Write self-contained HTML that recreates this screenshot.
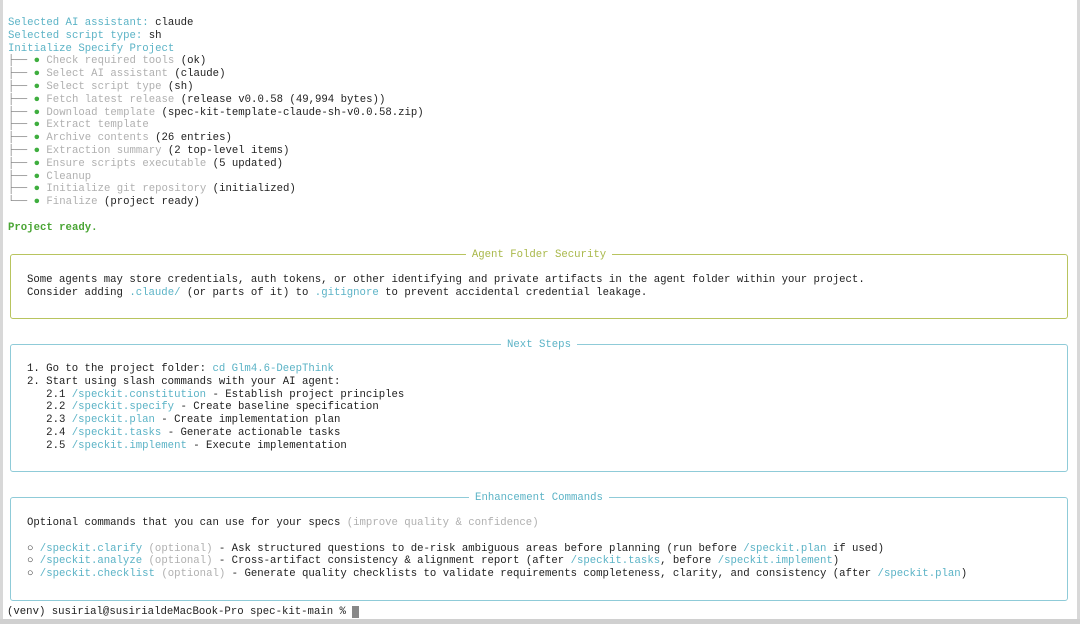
<!DOCTYPE html>
<html><head><meta charset="utf-8"><style>
html,body{margin:0;padding:0;background:#fff;width:1080px;height:624px;overflow:hidden;position:relative}
.t{font-family:"Liberation Mono","DejaVu Sans Mono",monospace;font-size:10.67px;line-height:12.8px;color:#1e1e1e;white-space:pre;position:absolute;margin:0}
.c{color:#5bb3c6}.g{color:#b0b0b0}.d{color:#3fae3f}.tr{color:#888}
.pr{color:#4aa534;font-weight:bold}
.box{position:absolute;left:10px;width:1056px;border:1px solid #8fcbd8;border-radius:3px}
.ol{border-color:#b8c45e}
.ttl{position:absolute;top:-6px;left:0;right:0;text-align:center;font-family:"Liberation Mono",monospace;font-size:10.67px;line-height:12.8px;white-space:pre}
.ttl span{background:#fff;padding:0 6px}
</style></head><body>
<div style="position:absolute;left:0;top:0;width:3px;height:624px;background:#d8d8d8"></div>
<div style="position:absolute;right:0;top:0;width:3px;height:624px;background:#d8d8d8"></div>
<div style="position:absolute;left:0;top:619px;width:1080px;height:5px;background:#d0d0d0"></div>
<pre class="t" style="left:8px;top:17px"><span class="c">Selected AI assistant:</span> claude
<span class="c">Selected script type:</span> sh
<span class="c">Initialize Specify Project</span>
<span class="tr">├──</span> <span class="d">●</span> <span class="g">Check required tools</span> (ok)
<span class="tr">├──</span> <span class="d">●</span> <span class="g">Select AI assistant</span> (claude)
<span class="tr">├──</span> <span class="d">●</span> <span class="g">Select script type</span> (sh)
<span class="tr">├──</span> <span class="d">●</span> <span class="g">Fetch latest release</span> (release v0.0.58 (49,994 bytes))
<span class="tr">├──</span> <span class="d">●</span> <span class="g">Download template</span> (spec-kit-template-claude-sh-v0.0.58.zip)
<span class="tr">├──</span> <span class="d">●</span> <span class="g">Extract template</span>
<span class="tr">├──</span> <span class="d">●</span> <span class="g">Archive contents</span> (26 entries)
<span class="tr">├──</span> <span class="d">●</span> <span class="g">Extraction summary</span> (2 top-level items)
<span class="tr">├──</span> <span class="d">●</span> <span class="g">Ensure scripts executable</span> (5 updated)
<span class="tr">├──</span> <span class="d">●</span> <span class="g">Cleanup</span>
<span class="tr">├──</span> <span class="d">●</span> <span class="g">Initialize git repository</span> (initialized)
<span class="tr">└──</span> <span class="d">●</span> <span class="g">Finalize</span> (project ready)

<span class="pr">Project ready.</span></pre>

<div class="box ol" style="top:254px;height:63px"><div class="ttl" style="color:#a9b84a"><span>Agent Folder Security</span></div></div>
<pre class="t" style="left:27px;top:274px">Some agents may store credentials, auth tokens, or other identifying and private artifacts in the agent folder within your project.
Consider adding <span class="c">.claude/</span> (or parts of it) to <span class="c">.gitignore</span> to prevent accidental credential leakage.</pre>

<div class="box" style="top:344px;height:126px"><div class="ttl" style="color:#5bb3c6"><span>Next Steps</span></div></div>
<pre class="t" style="left:27px;top:363px">1. Go to the project folder: <span class="c">cd Glm4.6-DeepThink</span>
2. Start using slash commands with your AI agent:
   2.1 <span class="c">/speckit.constitution</span> - Establish project principles
   2.2 <span class="c">/speckit.specify</span> - Create baseline specification
   2.3 <span class="c">/speckit.plan</span> - Create implementation plan
   2.4 <span class="c">/speckit.tasks</span> - Generate actionable tasks
   2.5 <span class="c">/speckit.implement</span> - Execute implementation</pre>

<div class="box" style="top:497px;height:102px"><div class="ttl" style="color:#5bb3c6"><span>Enhancement Commands</span></div></div>
<pre class="t" style="left:27px;top:517px">Optional commands that you can use for your specs <span class="g">(improve quality &amp; confidence)</span>

○ <span class="c">/speckit.clarify</span> <span class="g">(optional)</span> - Ask structured questions to de-risk ambiguous areas before planning (run before <span class="c">/speckit.plan</span> if used)
○ <span class="c">/speckit.analyze</span> <span class="g">(optional)</span> - Cross-artifact consistency &amp; alignment report (after <span class="c">/speckit.tasks</span>, before <span class="c">/speckit.implement</span>)
○ <span class="c">/speckit.checklist</span> <span class="g">(optional)</span> - Generate quality checklists to validate requirements completeness, clarity, and consistency (after <span class="c">/speckit.plan</span>)</pre>

<pre class="t" style="left:7px;top:606px">(venv) susirial@susirialdeMacBook-Pro spec-kit-main % <span style="background:#888;color:#888"> </span></pre>
</body></html>
